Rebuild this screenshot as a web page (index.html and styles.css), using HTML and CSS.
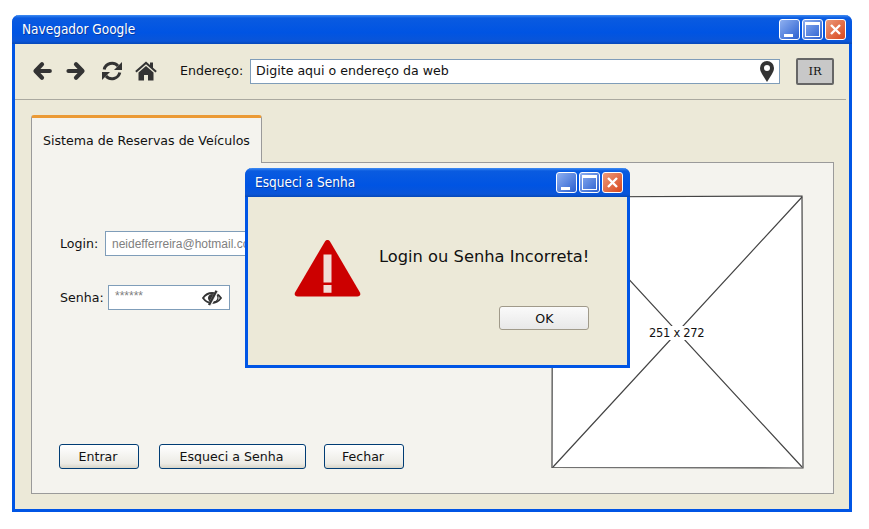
FILE: index.html
```html
<!DOCTYPE html>
<html lang="en">
<head>
    <meta charset="UTF-8">
    <title>Navegador Google</title>
    <link rel="stylesheet" href="styles.css">
</head>
<body>
    <div class="window">
        <div class="titlebar">
            <span class="title">Navegador Google</span>
            <div class="controls">
                <span class="ctl ctl-min"><i></i></span>
                <span class="ctl ctl-max"><i></i></span>
                <span class="ctl ctl-close">
                    <svg width="13" height="13" viewBox="0 0 13 13"><path d="M2 2l9 9M11 2l-9 9" stroke="#fff" stroke-width="2.4" fill="none"/></svg>
                </span>
            </div>
        </div>

        <div class="toolbar">
            <svg class="icon icon-back" width="20" height="20" viewBox="0 0 20 20"><path d="M10 3.200L3.500 10l6.500 6.800M4 10H17.800" fill="none" stroke="#333" stroke-width="4.200" stroke-linejoin="round" stroke-linecap="round"/></svg>
            <svg class="icon icon-fwd" width="20" height="20" viewBox="0 0 20 20"><path d="M10 3.200L16.500 10 10 16.800M16 10H2.500" fill="none" stroke="#333" stroke-width="4.200" stroke-linejoin="round" stroke-linecap="round"/></svg>
            <svg class="icon icon-reload" width="22" height="20" viewBox="0 0 22 20">
                <path d="M3.200 8.500A8 8 0 0 1 17 5" fill="none" stroke="#333" stroke-width="3"/>
                <path d="M21 1v8h-8z" fill="#333"/>
                <path d="M18.800 11.500A8 8 0 0 1 5 15" fill="none" stroke="#333" stroke-width="3"/>
                <path d="M1 19v-8h8z" fill="#333"/>
            </svg>
            <svg class="icon icon-home" width="22" height="20" viewBox="0 0 22 20">
                <path d="M11 .5l4 3.500V1.500h3v5.200l3.800 3.300-1.300 1.500L11 3.300 1.500 11.500.2 10z" fill="#333"/>
                <path d="M11 5l7.500 6.500V19.500h-5.500v-5.500h-4v5.500H3.500V11.500z" fill="#333"/>
            </svg>
            <label class="addr-label">Endereço:</label>
            <div class="addr-box">
                <span class="addr-text">Digite aqui o endereço da web</span>
                <svg width="14" height="21" viewBox="0 0 14 21"><path fill-rule="evenodd" d="M7 0a7 7 0 0 1 7 7c0 2.500-1 4-2 6l-5 8-5-8C1 11 0 9.500 0 7a7 7 0 0 1 7-7zm0 4a3 3 0 1 0 0 6 3 3 0 0 0 0-6z" fill="#333"/></svg>
            </div>
            <button class="go-btn">IR</button>
        </div>

        <div class="content">
            <div class="tab">Sistema de Reservas de Veículos</div>
            <div class="panel">
                <div class="form">
                    <div class="field field-login">
                        <label>Login:</label>
                        <div class="input input-login">neidefferreira@hotmail.com</div>
                    </div>
                    <div class="field field-pass">
                        <label>Senha:</label>
                        <div class="input input-pass">
                            <span class="stars">******</span>
                            <svg width="20" height="16" viewBox="0 0 20 16">
                                <path d="M1 8c2.500-3.500 5.500-5 9-5s6.500 1.500 9 5c-2.500 3.500-5.500 5-9 5s-6.500-1.500-9-5z" fill="none" stroke="#333" stroke-width="1.800"/>
                                <path d="M10 4a4 4 0 0 0-3.500 6l1.500 2 4-7.500z" fill="#333"/>
                                <path d="M14 4.500a4 4 0 0 1-3 7.300" fill="none" stroke="#333" stroke-width="1.200"/>
                                <path d="M15.500 .5L7.500 15.500" stroke="#f3f3f3" stroke-width="3.600"/>
                                <path d="M14.500 .8L7 15" stroke="#333" stroke-width="2.400"/>
                            </svg>
                        </div>
                    </div>
                    <div class="actions">
                        <button class="btn btn-entrar">Entrar</button>
                        <button class="btn btn-esqueci">Esqueci a Senha</button>
                        <button class="btn btn-entrar">Fechar</button>
                    </div>
                </div>
                <div class="placeholder">
                    <svg width="253" height="274" viewBox="0 0 253 274">
                        <path d="M1.500 2L251 1l1 272L1 272.500z" fill="#fff" stroke="#444" stroke-width="1.200"/>
                        <path d="M2 2l249 270M251 2L2 272" stroke="#444" stroke-width="1.200"/>
                    </svg>
                    <span class="placeholder-size">251 x 272</span>
                </div>
            </div>
        </div>
    </div>

    <div class="dialog">
        <div class="titlebar titlebar-dialog">
            <span class="title">Esqueci a Senha</span>
            <div class="controls">
                <span class="ctl ctl-min"><i></i></span>
                <span class="ctl ctl-max"><i></i></span>
                <span class="ctl ctl-close">
                    <svg width="13" height="13" viewBox="0 0 13 13"><path d="M2 2l9 9M11 2l-9 9" stroke="#fff" stroke-width="2.400" fill="none"/></svg>
                </span>
            </div>
        </div>
        <div class="dialog-body">
            <svg class="warn" width="67" height="58" viewBox="0 0 67 60" preserveAspectRatio="none">
                <path d="M33.500 1c1.200 0 2 .6 2.800 2L65.800 55c1.300 2.500.2 4.500-2.500 4.500H3.700C1 59.500-.1 57.500 1.200 55L30.700 3c.8-1.400 1.600-2 2.800-2z" fill="#cc0000"/>
                <path d="M29.500 16h8v29h-8zM29.500 47.500h8v8h-8z" fill="#f1dcd6"/>
            </svg>
            <div class="dialog-main">
                <p class="dialog-msg">Login ou Senha Incorreta!</p>
                <button class="ok-btn">OK</button>
            </div>
        </div>
    </div>
</body>
</html>
```

FILE: styles.css
```css
* { box-sizing: border-box; }
html, body { height: 100%; }
body {
    margin: 0;
    padding: 15px 17px 17px 12px;
    background-color: white;
    font-family: 'DejaVu Sans', sans-serif;
    font-size: 12.6px;
    color: #111;
    overflow: hidden;
}
.window {
    width: 840px;
    height: 497px;
    display: flex;
    flex-direction: column;
    border: 3px solid #0055e5;
    border-top: none;
    border-radius: 7px 7px 0 0;
    background-color: #ece9d8;
}
.titlebar {
    height: 29px;
    flex: none;
    margin: 0 -3px;
    padding: 0 6px 0 10px;
    display: flex;
    align-items: center;
    justify-content: space-between;
    border-radius: 7px 7px 0 0;
    background: linear-gradient(#3f8cf3 0, #0a5be0 3px, #0054e3 60%, #0a55d8 90%, #0648b8 100%);
}
.title {
    margin-top: -2px;
    color: white;
    font-family: 'DejaVu Sans Condensed', 'DejaVu Sans', sans-serif;
    font-stretch: condensed;
    font-size: 13.500px;
    text-shadow: 1px 1px 0 #0a3aa0;
}
.controls { display: flex; gap: 2px; }
.ctl {
    width: 21px;
    height: 21px;
    border: 1px solid white;
    border-radius: 3px;
    display: flex;
    align-items: center;
    justify-content: center;
    background: linear-gradient(135deg, #8fb0f0, #2a5fd0);
}
.ctl-close { background: linear-gradient(135deg, #ec9a7a, #d9471e); }
.ctl-min i {
    display: block;
    width: 9px;
    height: 3px;
    margin: 11px 2px 0 0;
    background-color: white;
}
.ctl-max i {
    display: block;
    width: 15px;
    height: 15px;
    border: 1px solid white;
    border-top-width: 3px;
}
.toolbar {
    height: 56px;
    flex: none;
    display: flex;
    align-items: center;
    padding: 0 12px 1px 17px;
    margin-right: 3px;
    border-bottom: 1px solid #aaa9a0;
}
.icon { flex: none; }
.icon-back { margin-right: 14px; }
.icon-fwd { margin-right: 15px; }
.icon-reload { margin-right: 12px; }
.icon-home { margin-right: 23px; }
.addr-label { width: 70px; flex: none; margin-top: -1px; }
.addr-box {
    width: 530px;
    height: 25px;
    flex: none;
    display: flex;
    align-items: center;
    justify-content: space-between;
    padding: 0 5px;
    background-color: white;
    border: 1px solid #7f9db9;
}
.addr-text { margin-top: -2px; }
.go-btn {
    width: 38px;
    height: 27px;
    flex: none;
    margin-left: 16px;
    padding: 0;
    font-family: 'DejaVu Serif', serif;
    font-size: 11.500px;
    color: #111;
    background-color: #c8c8c8;
    border: 2px solid #666;
    border-radius: 2px;
}
.content {
    flex: 1;
    padding: 15px 15px 15px 16px;
    display: flex;
    flex-direction: column;
    min-height: 0;
}
.tab {
    width: 231px;
    height: 48px;
    flex: none;
    margin-bottom: -1px;
    position: relative;
    z-index: 1;
    padding: 15px 0 0 11px;
    white-space: nowrap;
    background-color: #f4f3ee;
    border: 1px solid #9a9a9a;
    border-bottom: none;
    border-top: 3px solid #eb9a35;
    border-radius: 3px 3px 0 0;
}
.panel {
    flex: 1;
    display: flex;
    justify-content: space-between;
    background-color: #f4f3ee;
    border: 1px solid #9a9a9a;
    padding: 32px 29px 24px 27px;
    min-height: 0;
}
.form { display: flex; flex-direction: column; }
.field { display: flex; align-items: center; }
.field label { width: 46px; flex: none; padding-left: 1px; }
.field-pass { margin-top: 29px; }
.field-pass label { width: 49px; }
.field-login { margin-top: 36px; }
.input {
    height: 25px;
    background-color: white;
    border: 1px solid #7f9db9;
    font-family: 'Liberation Sans', sans-serif;
    font-size: 12px;
    color: #808080;
    display: flex;
    align-items: center;
    padding: 0 6px;
}
.input-login { width: 180px; white-space: nowrap; overflow: hidden; }
.input-pass { width: 122px; justify-content: space-between; padding-right: 7px; }
.stars { margin-top: -3px; }
.actions { display: flex; margin-top: auto; }
.btn {
    height: 25px;
    width: 80px;
    padding: 0 2px 0 0;
    font-family: 'DejaVu Sans', sans-serif;
    font-size: 12.6px;
    color: #111;
    background: linear-gradient(#fff, #ecebe5 80%, #d8d5c8);
    border: 1px solid #003c74;
    border-radius: 3px;
}
.btn-entrar + .btn-esqueci { margin-left: 20px; }
.btn-esqueci { width: 147px; margin-right: 18px; }
.placeholder {
    position: relative;
    width: 253px;
    height: 274px;
    flex: none;
    align-self: flex-end;
}
.placeholder svg { display: block; }
.placeholder-size {
    position: absolute;
    left: 97px;
    top: 131px;
    padding: 0 1px;
    background-color: white;
    font-family: 'DejaVu Sans', sans-serif;
    font-size: 11.500px;
    letter-spacing: -0.3px;
    color: #111;
}
.dialog {
    position: absolute;
    left: 245px;
    top: 168px;
    width: 385px;
    height: 200px;
    display: flex;
    flex-direction: column;
    background-color: #ece9d8;
    border: 3px solid #0055e5;
    border-top: none;
    border-radius: 7px 7px 0 0;
}
.titlebar-dialog { padding-right: 7px; }
.dialog-body {
    flex: 1;
    display: flex;
    padding: 42px 38px 0 46px;
}
.warn { flex: none; margin-right: 18px; }
.dialog-main {
    flex: 1;
    display: flex;
    flex-direction: column;
    align-items: flex-end;
}
.dialog-msg {
    margin: 8px 0 0 0;
    font-size: 16.300px;
    white-space: nowrap;
}
.ok-btn {
    width: 90px;
    height: 24px;
    margin-top: 40px;
    padding: 0;
    font-family: 'DejaVu Sans', sans-serif;
    font-size: 12.6px;
    color: #111;
    background: linear-gradient(#fafafa, #e8e8e8);
    border: 1px solid #a09a8a;
    border-radius: 3px;
}
```
